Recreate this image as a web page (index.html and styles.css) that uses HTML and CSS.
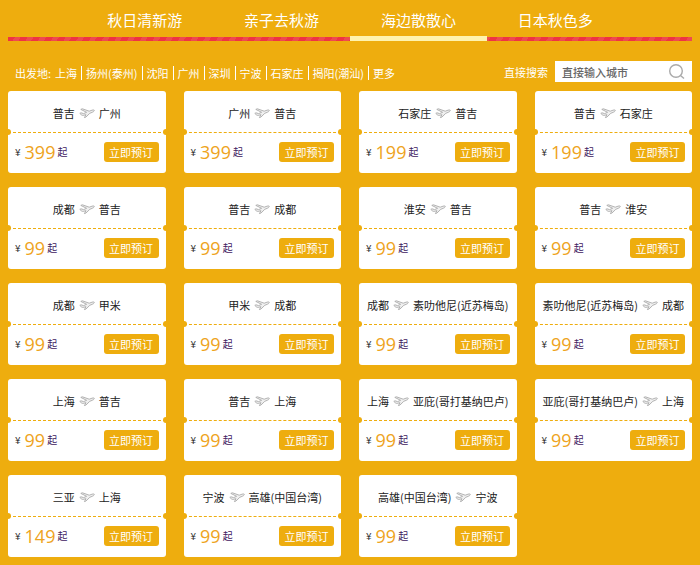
FILE: index.html
```
<!DOCTYPE html>
<html lang="zh-CN">
<head>
  <meta charset="UTF-8">
  <meta name="viewport" content="width=device-width, initial-scale=1.0">
  <title>海边散散心</title>
  <link rel="stylesheet" href="styles.css">
</head>
<body>
  <svg width="0" height="0" class="sprite" aria-hidden="true">
    <symbol id="plane" viewBox="0 0 16 12">
      <path d="M0.8 6.4 L2 5.8 L4.6 6.6 L7.6 5.3 L1.8 2.4 L3.4 1.8 L10.2 4.2 L13 3.2 C14.6 2.7 15.4 3 15.3 3.6 C15.2 4.3 14 5 13 5.4 L10.8 6.3 L6.8 10.2 L5.4 10.6 L7 7.7 L4.2 8.4 C3 8.6 2 7.6 0.8 6.4 Z"/>
    </symbol>
  </svg>

  <!-- Themes -->
  <nav class="tabs">
    <a href="#">秋日清新游</a>
    <a href="#">亲子去秋游</a>
    <a href="#" class="active">海边散散心</a>
    <a href="#">日本秋色多</a>
  </nav>

  <!-- Departure city and search -->
  <div class="filter">
    <div class="cities">
      <span>出发地:</span>
      <a href="#">上海</a>
      <a href="#">扬州(泰州)</a>
      <a href="#">沈阳</a>
      <a href="#">广州</a>
      <a href="#">深圳</a>
      <a href="#">宁波</a>
      <a href="#">石家庄</a>
      <a href="#">揭阳(潮汕)</a>
      <a href="#">更多</a>
    </div>
    <form class="search">
      <label for="city">直接搜索</label>
      <div class="search-box">
        <input type="text" id="city" placeholder="直接输入城市">
        <button type="button" aria-label="搜索">
          <svg width="18" height="18" viewBox="0 0 18 18"><circle cx="8" cy="8" r="6.3"/><path d="M12.5 12.5 L16 15.5"/></svg>
        </button>
      </div>
    </form>
  </div>

  <!-- Tickets -->
  <div class="tickets" id="tickets"></div>

  <script>
    const tickets = [
      ["普吉", "广州", 399], ["广州", "普吉", 399], ["石家庄", "普吉", 199], ["普吉", "石家庄", 199],
      ["成都", "普吉", 99], ["普吉", "成都", 99], ["淮安", "普吉", 99], ["普吉", "淮安", 99],
      ["成都", "甲米", 99], ["甲米", "成都", 99], ["成都", "素叻他尼(近苏梅岛)", 99], ["素叻他尼(近苏梅岛)", "成都", 99],
      ["上海", "普吉", 99], ["普吉", "上海", 99], ["上海", "亚庇(哥打基纳巴卢)", 99], ["亚庇(哥打基纳巴卢)", "上海", 99],
      ["三亚", "上海", 149], ["宁波", "高雄(中国台湾)", 99], ["高雄(中国台湾)", "宁波", 99]
    ];

    document.getElementById("tickets").innerHTML = tickets.map(([from, to, price]) => `
      <div class="ticket">
        <div class="route">
          <span>${from}</span>
          <svg class="plane" width="16" height="12"><use href="#plane"/></svg>
          <span>${to}</span>
        </div>
        <div class="fare">
          <span class="yen">¥</span>
          <span class="price">${price}</span>
          <span class="from">起</span>
          <button type="button" class="book">立即预订</button>
        </div>
      </div>`).join("");
  </script>
</body>
</html>
```

FILE: styles.css
```
* {
  box-sizing: border-box;
}

body {
  margin: 0;
  padding: 0 8px 8px;
  background-color: #eead0e;
  color: #333;
  font-family: "Noto Sans CJK SC", sans-serif;
  font-size: 11px;
  line-height: 16px;
}

a {
  color: inherit;
  text-decoration: none;
}

button {
  font: inherit;
  border: none;
  cursor: pointer;
}

.sprite {
  position: absolute;
}

/* themes */
.tabs {
  display: flex;
  height: 41px;
  padding: 0 10%;
  background: repeating-linear-gradient(120deg, #ee3344 0 6px, #ee4a50 6px 11px) bottom / 100% 4px no-repeat;
}

.tabs a {
  flex: 1;
  color: white;
  font-size: 15px;
  line-height: 40px;
  text-align: center;
}

.tabs .active {
  border-bottom: 5px solid #fff3ae;
}

/* departure city and search */
.filter {
  display: flex;
  justify-content: space-between;
  padding: 20px 0 9px;
  color: white;
}

.cities {
  display: flex;
  align-items: center;
  padding: 3px 0 0 7px;
  white-space: nowrap;
}

.cities a {
  padding: 0 4px;
  line-height: 14px;
}

.cities a + a {
  border-left: 1px solid white;
}

.search {
  display: flex;
  align-items: center;
  gap: 7px;
}

.search-box {
  display: flex;
  align-items: center;
  width: 137px;
  height: 21px;
  background: white;
}

.search-box input {
  flex: 1;
  min-width: 0;
  padding: 0 0 0 7px;
  border: none;
  outline: none;
  background: none;
  font: inherit;
  font-weight: 500;
}

.search-box input::placeholder {
  color: #666;
}

.search-box button {
  display: flex;
  padding: 0 6px 0 0;
  background: none;
}

.search-box svg {
  fill: none;
  stroke: #aaa;
  stroke-width: 1.4;
}

/* tickets */
.tickets {
  display: grid;
  grid-template-columns: repeat(4, 1fr);
  gap: 14px 18px;
}

.ticket {
  background: white;
  border-radius: 3px;
}

.route {
  display: flex;
  align-items: center;
  justify-content: center;
  gap: 4px;
  height: 41px;
  padding-top: 3px;
  color: #222;
  white-space: nowrap;
}

.plane {
  fill: #f0f0f0;
  stroke: #aaa;
  stroke-width: 0.9;
}

.fare {
  position: relative;
  display: flex;
  align-items: center;
  height: 41px;
  padding: 0 7px 2px;
  border-top: 1px dashed #eead0e;
}

/* punched notches on both ends of the tear line */
.fare::before,
.fare::after {
  content: "";
  position: absolute;
  top: -4px;
  width: 6px;
  height: 6px;
  border-radius: 50%;
  background: #eead0e;
}

.fare::before {
  left: -3px;
}

.fare::after {
  right: -3px;
}

.yen {
  font-size: 10px;
}

.price {
  margin: 0 2px 0 4px;
  color: #eea320;
  font-family: "Open Sans", "Noto Sans", sans-serif;
  font-size: 18px;
}

.from {
  color: #402060;
  font-size: 10px;
}

.book {
  width: 55px;
  height: 20px;
  margin-left: auto;
  padding: 0;
  border-radius: 3px;
  background: #eead0e;
  color: white;
  line-height: 20px;
}
```
